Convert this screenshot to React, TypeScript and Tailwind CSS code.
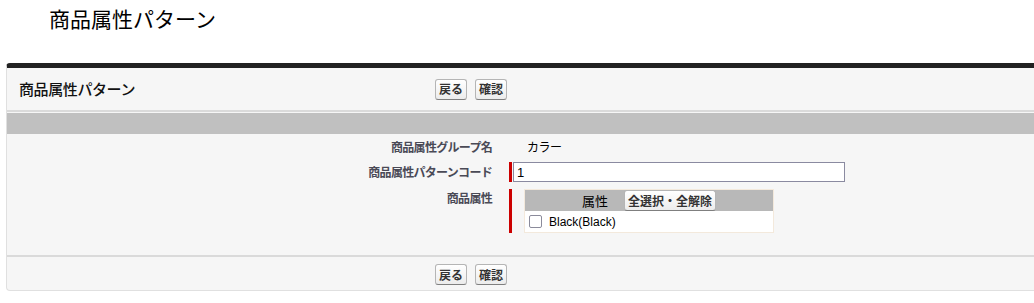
import React, { useState } from "react";

const jp = { fontFamily: '"Noto Sans CJK JP", "Liberation Sans", sans-serif' };

function Btn({ children, className = "" }: { children: React.ReactNode; className?: string }) {
  return (
    <button
      type="button"
      className={
        "h-[21px] rounded-[3px] border border-[#b5b5b5] border-b-[#7f7f7f] bg-gradient-to-b from-white to-[#ececec] px-[3px] text-[12px] font-bold leading-[18px] text-[#333] " +
        className
      }
    >
      {children}
    </button>
  );
}

export default function App() {
  const [checked, setChecked] = useState(false);
  const [code, setCode] = useState("1");

  return (
    <div className="h-[303px] w-[1034px] overflow-hidden bg-white text-black" style={jp}>
      {/* page title */}
      <h1 className="pl-[49px] pt-[4px] text-[21px] font-normal leading-[28px]">商品属性パターン</h1>

      {/* panel */}
      <div className="ml-[6px] mt-[31px] w-[1040px] rounded-tl-[4px] rounded-bl-[4px] border-t-[5px] border-l border-b border-t-[#222] border-l-[#e0e0e0] border-b-[#e0e0e0] bg-[#f6f6f6]">
        {/* header */}
        <div className="flex h-[44px] items-center border-b-2 border-[#dadada]">
          <h2 className="w-[428px] pl-[12px] text-[15px] font-medium leading-[20px] tracking-[-0.4px] text-[#111]">
            商品属性パターン
          </h2>
          <div className="flex gap-[8px]">
            <Btn>戻る</Btn>
            <Btn>確認</Btn>
          </div>
        </div>

        {/* section bar */}
        <div className="mt-[1px] h-[21px] bg-[#c0c0c0]" />

        {/* rows */}
        <div className="border-b-2 border-[#dadada] pb-[22px] pt-[3px] text-[12px] leading-[16px]">
          <div className="flex h-[20px] items-center">
            <div className="w-[496px] pr-[11px] text-right font-bold tracking-[-0.7px] text-[#4a4a56]">商品属性グループ名</div>
            <div className="pl-[24px] tracking-[-0.5px]">カラー</div>
          </div>

          <div className="mt-[5px] flex h-[20px] items-center">
            <div className="w-[496px] pr-[11px] text-right font-bold tracking-[-0.7px] text-[#4a4a56]">商品属性パターンコード</div>
            <div className="ml-[6px] flex h-[20px] items-stretch">
              <div className="w-[3px] bg-[#c00]" />
              <input
                value={code}
                onChange={(e) => setCode(e.target.value)}
                className="ml-[1px] h-[20px] w-[332px] border border-[#8a8aa0] bg-white px-[3px] text-[13px] leading-[17px] outline-none"
                style={{ fontFamily: '"Liberation Sans", sans-serif' }}
              />
            </div>
          </div>

          <div className="mt-[7px] flex">
            <div className="w-[496px] pr-[11px] pt-[1px] text-right font-bold tracking-[-0.7px] text-[#4a4a56]">商品属性</div>
            <div className="ml-[6px] flex">
              <div className="w-[3px] bg-[#c00]" />
              <div className="ml-[12px] w-[250px] border border-[#f3e9dc] bg-white">
                <div className="flex h-[21px] items-center justify-center gap-[16px] bg-[#b8b8b8]">
                  <span className="text-[13px] leading-[16px]">属性</span>
                  <Btn className="h-[19px] rounded-[2px] leading-[16px]">全選択・全解除</Btn>
                </div>
                <label className="flex h-[21px] items-center pl-[4px]">
                  <input
                    type="checkbox"
                    checked={checked}
                    onChange={() => setChecked((c) => !c)}
                    className="h-[13px] w-[13px] appearance-none rounded-[2px] border border-[#8b8b9b] bg-white checked:bg-[#333]"
                  />
                  <span className="ml-[7px] text-[12px]" style={{ fontFamily: '"Liberation Sans", sans-serif' }}>
                    Black(Black)
                  </span>
                </label>
              </div>
            </div>
          </div>
        </div>

        {/* footer buttons */}
        <div className="flex h-[33px] items-start pl-[428px] pt-[7px]">
          <div className="flex gap-[8px]">
            <Btn>戻る</Btn>
            <Btn>確認</Btn>
          </div>
        </div>
      </div>
    </div>
  );
}
